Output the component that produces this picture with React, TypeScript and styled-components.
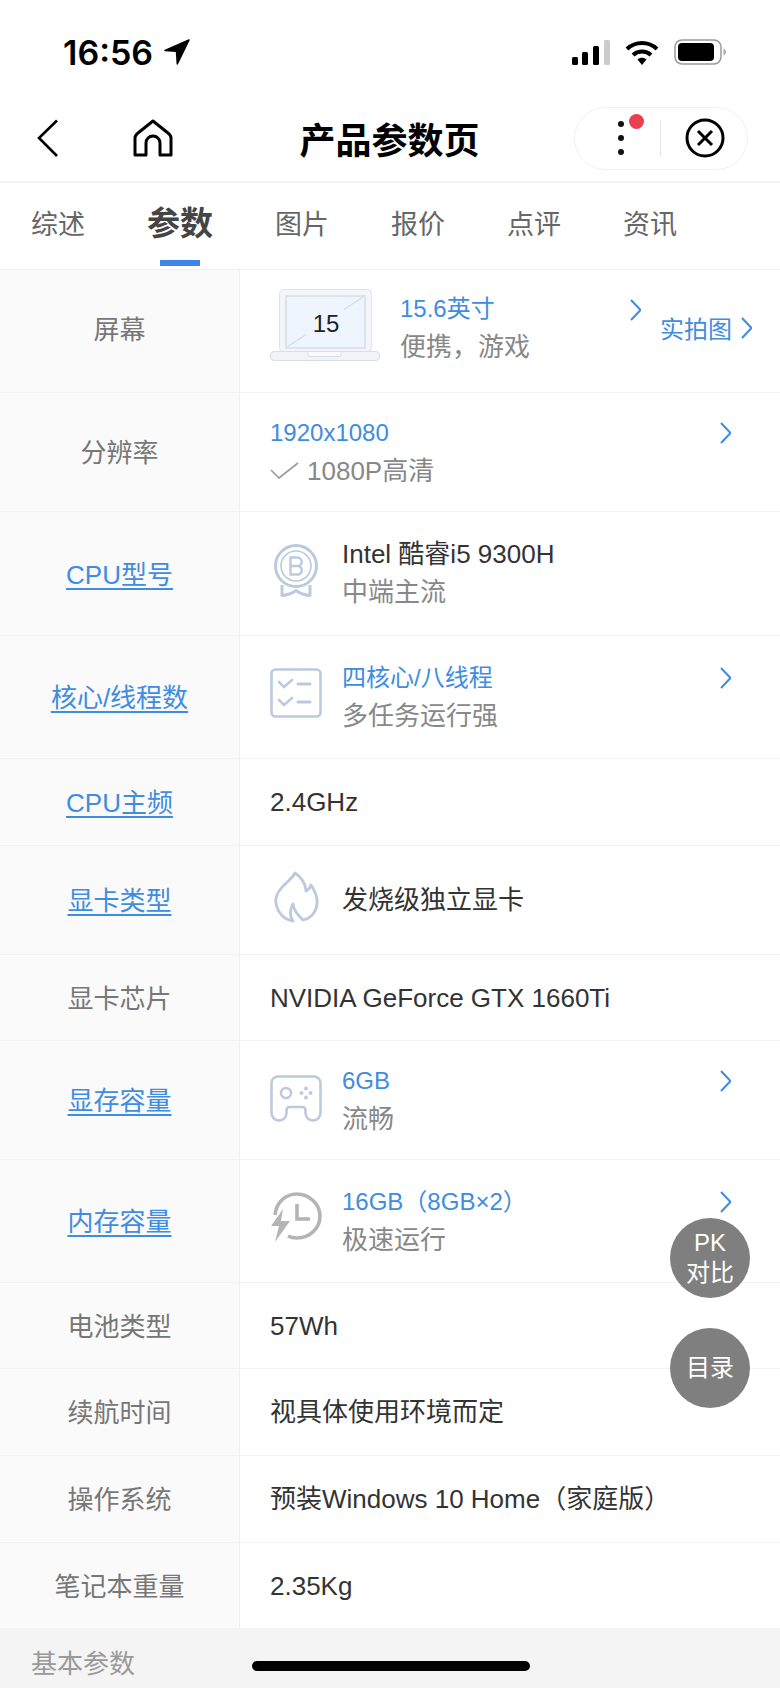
import React from "react";
import styled, { createGlobalStyle } from "styled-components";

const Global = createGlobalStyle`
  html, body { margin: 0; padding: 0; background: #fff; }
  body { font-family: "Liberation Sans", "Noto Sans CJK SC", sans-serif; }
  * { box-sizing: border-box; }
`;

const Page = styled.div`
  position: relative;
  width: 780px;
  height: 1688px;
  overflow: hidden;
  background: #fff;
`;

const StatusBar = styled.div`
  height: 88px;
  padding: 30px 54px 0 63px;
  display: flex;
  justify-content: space-between;
  align-items: flex-start;
`;
const TimeGroup = styled.div`
  display: flex;
  align-items: center;
  gap: 11px;
  height: 44px;
`;
const Time = styled.span`
  font-family: Inter, "Liberation Sans", sans-serif;
  font-size: 34px;
  font-weight: 600;
  color: #000;
`;
const StatusIcons = styled.div`
  display: flex;
  align-items: center;
  gap: 15px;
  height: 44px;
`;

const NavBar = styled.div`
  height: 95px;
  position: relative;
  display: flex;
  align-items: center;
  padding: 7px 32px 0 36px;
  border-bottom: 2px solid #f4f4f4;
`;
const NavLeft = styled.div`
  display: flex;
  align-items: center;
  gap: 73px;
`;
const Title = styled.div`
  flex: 1;
  text-align: center;
  font-size: 36px;
  font-weight: 700;
  color: #000;
  padding-left: 32px;
`;
const Capsule = styled.div`
  width: 174px;
  height: 63px;
  border: 1px solid #f0f0f0;
  border-radius: 32px;
  display: flex;
  align-items: center;
  padding-left: 28px;
  position: relative;
`;
const Dots = styled.div`
  display: flex;
  flex-direction: column;
  gap: 8px;
  width: 57px;
  padding-left: 15px;
`;
const Dot = styled.span`
  width: 6px;
  height: 6px;
  border-radius: 50%;
  background: #111;
`;
const RedDot = styled.span`
  position: absolute;
  left: 54px;
  top: 6px;
  width: 15px;
  height: 15px;
  border-radius: 50%;
  background: #e8404f;
`;
const CapDivider = styled.span`
  width: 1px;
  height: 36px;
  background: #e6e6e6;
  margin-right: 24px;
`;

const Tabs = styled.div`
  height: 87px;
  display: flex;
  gap: 62px;
  padding-left: 31px;
  align-items: flex-start;
  border-bottom: 1px solid #f0f0f0;
`;
const Tab = styled.div<{ $active?: boolean }>`
  position: relative;
  height: 86px;
  line-height: ${(p) => (p.$active ? "82px" : "85px")};
  font-size: ${(p) => (p.$active ? "33px" : "27px")};
  font-weight: ${(p) => (p.$active ? 700 : 400)};
  color: ${(p) => (p.$active ? "#444" : "#666")};
`;
const TabBar = styled.span`
  position: absolute;
  left: 13px;
  bottom: 3px;
  width: 40px;
  height: 6px;
  background: #3d85e6;
`;

const Row = styled.div<{ $h: number }>`
  height: ${(p) => p.$h}px;
  display: flex;
  border-bottom: 1px solid #f3f3f3;
`;
const Label = styled.div<{ $link?: boolean; $lift?: boolean }>`
  width: 240px;
  flex: none;
  display: flex;
  align-items: center;
  justify-content: center;
  padding-bottom: ${(p) => (p.$lift ? "7px" : "3px")};
  background: #fafafa;
  border-right: 1px solid #f0f0f0;
  font-size: 26px;
  color: ${(p) => (p.$link ? "#408ce0" : "#777")};
  text-decoration: ${(p) => (p.$link ? "underline" : "none")};
  text-underline-offset: 4px;
`;
const Value = styled.div<{ $lift?: boolean }>`
  flex: 1;
  position: relative;
  display: flex;
  align-items: center;
  padding: 0 0 ${(p) => (p.$lift ? "6px" : "0")} 30px;
`;
const IconSlot = styled.div<{ $w: number; $up?: number }>`
  width: ${(p) => p.$w}px;
  flex: none;
  margin-right: 20px;
  margin-bottom: ${(p) => p.$up ?? 0}px;
  display: flex;
  justify-content: center;
`;
const Lines = styled.div`
  display: flex;
  flex-direction: column;
`;
const Primary = styled.div<{ $blue?: boolean }>`
  height: 36px;
  line-height: 36px;
  white-space: nowrap;
  font-size: ${(p) => (p.$blue ? "24px" : "26px")};
  color: ${(p) => (p.$blue ? "#408ce0" : "#333")};
`;
const Secondary = styled.div`
  height: 38px;
  line-height: 38px;
  margin-top: 1px;
  display: flex;
  align-items: center;
  gap: 8px;
  white-space: nowrap;
  font-size: 26px;
  color: #888;
`;
const Plain = styled.div`
  font-size: 26px;
  line-height: 36px;
  color: #333;
  white-space: nowrap;
`;
const RowChevron = styled.span<{ $first?: boolean }>`
  position: absolute;
  display: flex;
  left: ${(p) => (p.$first ? "390px" : "480px")};
  top: ${(p) => (p.$first ? "29px" : "calc(50% - 30px)")};
`;
const PhotoLink = styled.div`
  position: absolute;
  left: 420px;
  top: 40px;
  display: flex;
  align-items: center;
  gap: 9px;
  font-size: 24px;
  color: #408ce0;
`;

const SectionBar = styled.div`
  height: 59px;
  background: #f4f4f4;
  padding: 16px 0 0 31px;
  font-size: 26px;
  line-height: 38px;
  color: #999;
`;

const Float = styled.div<{ $top: number }>`
  position: absolute;
  left: 670px;
  top: ${(p) => p.$top}px;
  width: 80px;
  height: 80px;
  border-radius: 50%;
  background: #7f7f7f;
  color: #fff;
  font-size: 24px;
  line-height: 30px;
  text-align: center;
  display: flex;
  align-items: center;
  justify-content: center;
`;
const HomeIndicator = styled.div`
  position: absolute;
  left: 252px;
  top: 1661px;
  width: 278px;
  height: 10px;
  border-radius: 5px;
  background: #000;
`;

const ic = "#bccade";

const Chevron = ({ color = "#408ce0", h = 22 }: { color?: string; h?: number }) => (
  <svg width={h / 2} height={h} viewBox="0 0 11 22" fill="none">
    <path d="M1 1l9.5 10L1 21" stroke={color} strokeWidth="2" />
  </svg>
);

const Laptop = () => (
  <svg width="110" height="72" viewBox="0 0 110 72" fill="none">
    <rect x="9.5" y="0.5" width="92" height="62" rx="4" fill="#f4f5f8" stroke="#dfe3ea" />
    <rect x="16" y="7" width="79" height="52" fill="#eef5ff" stroke="#d5dce6" strokeWidth="1.5" />
    <path d="M17 58L93 8" stroke="#d6dce5" strokeWidth="1.2" />
    <rect x="36" y="18" width="38" height="30" fill="#eef5ff" />
    <text x="56" y="43" textAnchor="middle" fontSize="24" fill="#222" fontFamily="Liberation Sans">15</text>
    <rect x="0.5" y="62.5" width="109" height="9" rx="3.5" fill="#f2f3f6" stroke="#d9dee6" />
    <path d="M38 62.5h33v3a2 2 0 0 1-2 2H40a2 2 0 0 1-2-2z" fill="#fafbfc" stroke="#d9dee6" />
  </svg>
);
const Badge = () => (
  <svg width="44" height="53" viewBox="0 0 44 53" fill="none" stroke={ic} strokeWidth="2.2">
    <circle cx="22" cy="22" r="20.5" strokeWidth="3" />
    <circle cx="22" cy="22" r="15" strokeWidth="1.6" />
    <path d="M16.5 13.5h7a4.2 4.2 0 0 1 0 8.4h-7zM16.5 22h8a4.4 4.4 0 0 1 0 8.5h-8z" strokeWidth="2.4" />
    <path d="M8 41v10.5c5-.5 10-2 14-5 4 3 9 4.5 14 5V41" strokeWidth="3" strokeLinejoin="round" />
  </svg>
);
const Checklist = () => (
  <svg width="52" height="50" viewBox="0 0 52 50" fill="none" stroke={ic} strokeWidth="2.6" strokeLinecap="round">
    <rect x="1.5" y="1.5" width="49" height="47" rx="4" />
    <path d="M9 14l5 5 8-7M9 32l5 5 8-7" />
    <path d="M28 16h12M28 34h12" strokeWidth="3" />
  </svg>
);
const Flame = () => (
  <svg width="46" height="52" viewBox="0 0 46 52" fill="none" stroke={ic} strokeWidth="2.8" strokeLinejoin="round">
    <path d="M22 2C18 10 8 14 4 24C0 34 7 48 20 50C16 44 17 38 20 33C21 40 25 44 30 49C40 47 45 38 44 28C43 22 40 17 38 14C37 17 35 19 33 20C33 13 28 6 22 2z" />
  </svg>
);
const Gamepad = () => (
  <svg width="52" height="47" viewBox="0 0 52 47" fill="none" stroke={ic} strokeWidth="2.6">
    <path d="M8 1.5h36a6.5 6.5 0 0 1 6.5 6.5v30a7.5 7.5 0 0 1-15 0v-3a3 3 0 0 0-3-3H19.5a3 3 0 0 0-3 3v3a7.5 7.5 0 0 1-15 0V8A6.5 6.5 0 0 1 8 1.5z" />
    <circle cx="16" cy="18" r="5" />
    <g fill={ic} stroke="none">
      <circle cx="36" cy="13.5" r="2" />
      <circle cx="36" cy="22.5" r="2" />
      <circle cx="31.5" cy="18" r="2" />
      <circle cx="40.5" cy="18" r="2" />
    </g>
  </svg>
);
const Clock = () => (
  <svg width="52" height="52" viewBox="0 0 52 52" fill="none" stroke="#b4b4b4" strokeWidth="3.6">
    <path d="M5 24C6 12 15 3 27 3c12 0 23 10 23 22s-10 22-23 22c-3 0-6-.5-9-2" />
    <path d="M27 13v15h13" />
    <path d="M13 18L1 35h8L5 51l15-21h-9z" fill="#b4b4b4" stroke="none" />
  </svg>
);
const Tick = () => (
  <svg width="29" height="17" viewBox="0 0 29 17" fill="none" stroke="#999" strokeWidth="1.6">
    <path d="M1 8l8 8L28 1" />
  </svg>
);

type Item = {
  label: string;
  h: number;
  link?: boolean;
  plain?: string;
  top?: string;
  blue?: boolean;
  sub?: string;
  icon?: React.ReactNode;
  iconW?: number;
  iconUp?: number;
  tick?: boolean;
  chevron?: boolean;
  first?: boolean;
};

const items: Item[] = [
  { label: "屏幕", h: 123, top: "15.6英寸", blue: true, sub: "便携，游戏", icon: <Laptop />, iconW: 110, iconUp: 6, chevron: true, first: true },
  { label: "分辨率", h: 119, top: "1920x1080", blue: true, sub: "1080P高清", tick: true, chevron: true },
  { label: "CPU型号", h: 124, link: true, top: "Intel 酷睿i5 9300H", sub: "中端主流", icon: <Badge />, iconW: 52, iconUp: 6 },
  { label: "核心/线程数", h: 123, link: true, top: "四核心/八线程", blue: true, sub: "多任务运行强", icon: <Checklist />, iconW: 52, iconUp: 9 },
  { label: "CPU主频", h: 87, link: true, plain: "2.4GHz" },
  { label: "显卡类型", h: 109, link: true, plain: "发烧级独立显卡", icon: <Flame />, iconW: 52, iconUp: 6 },
  { label: "显卡芯片", h: 86, plain: "NVIDIA GeForce GTX 1660Ti" },
  { label: "显存容量", h: 119, link: true, top: "6GB", blue: true, sub: "流畅", icon: <Gamepad />, iconW: 52, iconUp: 4, chevron: true },
  { label: "内存容量", h: 123, link: true, top: "16GB（8GB×2）", blue: true, sub: "极速运行", icon: <Clock />, iconW: 52, iconUp: 8, chevron: true },
  { label: "电池类型", h: 86, plain: "57Wh" },
  { label: "续航时间", h: 87, plain: "视具体使用环境而定" },
  { label: "操作系统", h: 87, plain: "预装Windows 10 Home（家庭版）" },
  { label: "笔记本重量", h: 86, plain: "2.35Kg" },
];

items[3].chevron = true;

const tabs = ["综述", "参数", "图片", "报价", "点评", "资讯"];

export default function App() {
  return (
    <Page>
      <Global />
      <StatusBar>
        <TimeGroup>
          <Time>16:56</Time>
          <svg width="26" height="26" viewBox="0 0 26 26">
            <path d="M25 1L1 11.5l11.5.8.8 12.7z" fill="#000" stroke="#000" strokeWidth="1.5" strokeLinejoin="round" />
          </svg>
        </TimeGroup>
        <StatusIcons>
          <svg width="38" height="25" viewBox="0 0 38 25">
            <rect x="0" y="17" width="6" height="8" rx="1.5" fill="#000" />
            <rect x="10" y="12" width="6" height="13" rx="1.5" fill="#000" />
            <rect x="21" y="6" width="6" height="19" rx="1.5" fill="#000" />
            <rect x="32" y="0" width="6" height="25" rx="1.5" fill="#ccc" />
          </svg>
          <svg width="34" height="25" viewBox="0 0 34 25" fill="none">
            <path d="M2 9c8.5-8 21.5-8 30 0" stroke="#000" strokeWidth="4" />
            <path d="M8 15c5-4.7 13-4.7 18 0" stroke="#000" strokeWidth="4" />
            <path d="M12.5 19.5c2.6-2.2 6.4-2.2 9 0L17 25z" fill="#000" />
          </svg>
          <svg width="52" height="26" viewBox="0 0 52 26">
            <rect x="1" y="1" width="46" height="24" rx="7" fill="none" stroke="#999" strokeWidth="1.5" />
            <rect x="4" y="4" width="36" height="18" rx="4" fill="#000" />
            <path d="M49.5 9.5c1.5.5 2.5 2 2.5 3.5s-1 3-2.5 3.5z" fill="#aaa" />
          </svg>
        </StatusIcons>
      </StatusBar>

      <NavBar>
        <NavLeft>
          <svg width="24" height="38" viewBox="0 0 24 38" fill="none">
            <path d="M21 1.5L3 19l18 18" stroke="#000" strokeWidth="2.6" />
          </svg>
          <svg width="40" height="38" viewBox="0 0 40 38" fill="none" stroke="#000" strokeWidth="3" strokeLinejoin="round">
            <path d="M20 2L5 14c-2 1.5-3 3-3 5v17h11V24a7 7 0 0 1 14 0v12h11V19c0-2-1-3.5-3-5z" />
          </svg>
        </NavLeft>
        <Title>产品参数页</Title>
        <Capsule>
          <Dots>
            <Dot />
            <Dot />
            <Dot />
          </Dots>
          <RedDot />
          <CapDivider />
          <svg width="40" height="40" viewBox="0 0 40 40" fill="none" stroke="#000">
            <circle cx="20" cy="20" r="18" strokeWidth="3" />
            <path d="M13 13l14 14M27 13L13 27" strokeWidth="3" />
          </svg>
        </Capsule>
      </NavBar>

      <Tabs>
        {tabs.map((t, i) => (
          <Tab key={t} $active={i === 1}>
            {t}
            {i === 1 && <TabBar />}
          </Tab>
        ))}
      </Tabs>

      {items.map((it) => (
        <Row key={it.label} $h={it.h}>
          <Label $link={it.link} $lift={it.first}>{it.label}</Label>
          <Value $lift={it.first}>
            {it.icon && <IconSlot $w={it.iconW ?? 52} $up={it.iconUp}>{it.icon}</IconSlot>}
            {it.plain ? (
              <Plain>{it.plain}</Plain>
            ) : (
              <Lines>
                <Primary $blue={it.blue}>{it.top}</Primary>
                <Secondary>
                  {it.tick && <Tick />}
                  {it.sub}
                </Secondary>
              </Lines>
            )}
            {it.chevron && (
              <RowChevron $first={it.first}>
                <Chevron />
              </RowChevron>
            )}
            {it.first && (
              <PhotoLink>
                实拍图
                <Chevron />
              </PhotoLink>
            )}
          </Value>
        </Row>
      ))}

      <SectionBar>基本参数</SectionBar>

      <Float $top={1218}>
        PK
        <br />
        对比
      </Float>
      <Float $top={1328}>目录</Float>
      <HomeIndicator />
    </Page>
  );
}
